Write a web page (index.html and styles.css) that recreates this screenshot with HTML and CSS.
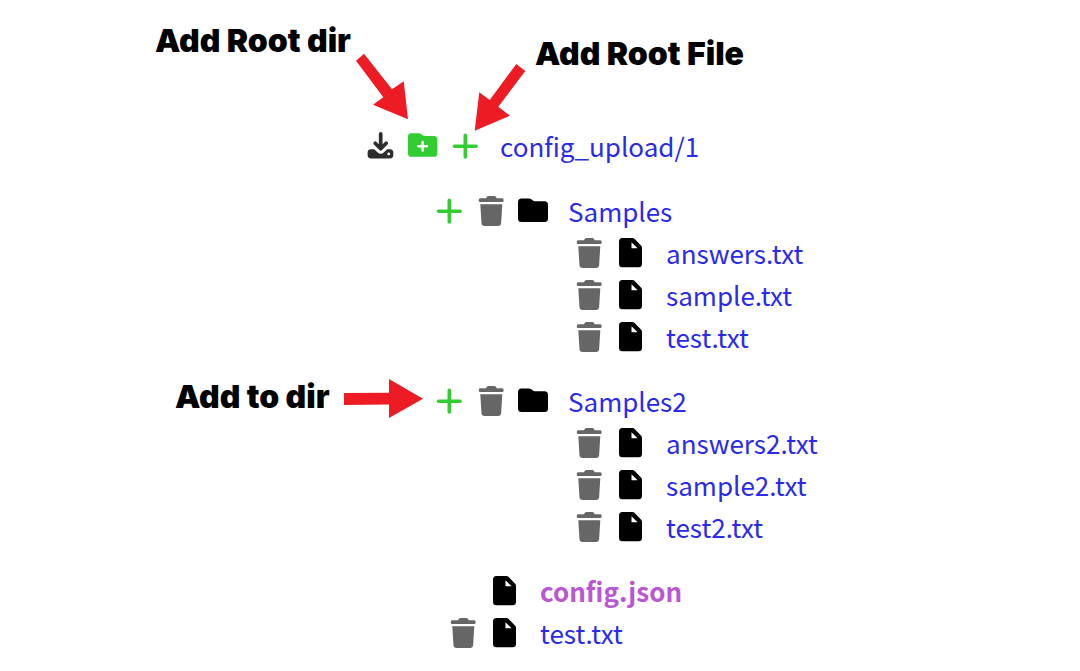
FILE: index.html
```
<!DOCTYPE html>
<html lang="en">
<head>
<meta charset="utf-8">
<title>config_upload</title>
<link rel="stylesheet" href="styles.css">
</head>
<body>
<svg class="sprite" aria-hidden="true">
  <symbol id="plus" viewBox="0 0 30 30"><path d="M15.3 4.4v21.6M4.5 15.2h21.6" fill="none" stroke="currentColor" stroke-width="3.6" stroke-linecap="round"/></symbol>
  <symbol id="trash" viewBox="0 0 30 30"><path d="M4.2 2.3H10l.7-1.2Q11.300 0 12.500 0h5.700q1.200 0 1.800 1.100l.7 1.200h5.500q1.500 0 1.500 1.850T26.200 6H4.200Q2.700 6 2.700 4.150T4.200 2.300zM4.300 8.200h22l-1.200 19.300q-.2 2.400-2.600 2.400H8.100q-2.400 0-2.600-2.400z" fill="currentColor"/></symbol>
  <symbol id="folder" viewBox="0 0 30 30"><path d="M3.500 2.500h7.300q1.400 0 2.500.8l2 1.500q.6.400 1.400.4h9.800Q30 5.200 30 8.700v13.800q0 3.500-3.500 3.500h-23Q0 26 0 22.500V6q0-3.500 3.500-3.500z" fill="currentColor"/></symbol>
  <symbol id="folder-plus" viewBox="0 0 30 30"><path d="M3.300 2.300h7.300q1.400 0 2.500.8l2 1.500q.6.400 1.400.4h9.500q3.300 0 3.300 3.400v14q0 3.400-3.300 3.400H3.300Q0 25.800 0 22.400V5.700q0-3.400 3.300-3.400z" fill="currentColor"/><path d="M14.700 11v8.400M10.500 15.200h8.400" fill="none" stroke="#fff" stroke-width="2.600" stroke-linecap="round"/></symbol>
  <symbol id="file" viewBox="0 0 30 30"><path fill-rule="evenodd" d="M6.400 0h10q1.200 0 2 .8l6.800 6.900q.8.800.8 2v16q0 3.500-3.400 3.500H6.400Q3 29.200 3 25.700V3.500Q3 0 6.400 0zM15.500 4.200v6.100h6.100z" fill="currentColor"/></symbol>
  <symbol id="download" viewBox="0 0 30 30"><path d="M14.700 2.800v14M9.200 12.200l5.500 5.500 5.500-5.500" fill="none" stroke="currentColor" stroke-width="3.700" stroke-linecap="round" stroke-linejoin="round"/><path fill-rule="evenodd" d="M5 18.300h3.200l3.500 3.200q3 2.500 6 0l3.500-3.200h2.700q3.400 0 3.400 3.400v2.400q0 3.400-3.400 3.400H5q-3.400 0-3.400-3.400v-2.400q0-3.400 3.400-3.400zM22.700 21.500a1.400 1.400 0 1 0 0 2.800 1.400 1.400 0 1 0 0-2.800z" fill="currentColor"/></symbol>
</svg>

<main class="board">
  <div class="row">
    <button class="icon dark" aria-label="Download"><svg><use href="#download"/></svg></button>
    <button class="icon green" aria-label="Add directory"><svg><use href="#folder-plus"/></svg></button>
    <button class="icon green" aria-label="Add file"><svg><use href="#plus"/></svg></button>
    <a class="name" href="#">config_upload/1</a>
  </div>

  <section class="group directory">
    <div class="row">
      <button class="icon green" aria-label="Add to Samples"><svg><use href="#plus"/></svg></button>
      <button class="icon grey" aria-label="Delete Samples"><svg><use href="#trash"/></svg></button>
      <span class="icon"><svg><use href="#folder"/></svg></span>
      <a class="name" href="#">Samples</a>
    </div>
    <ul class="files">
      <li class="row"><button class="icon grey" aria-label="Delete answers.txt"><svg><use href="#trash"/></svg></button><span class="icon"><svg><use href="#file"/></svg></span><a class="name" href="#">answers.txt</a></li>
      <li class="row"><button class="icon grey" aria-label="Delete sample.txt"><svg><use href="#trash"/></svg></button><span class="icon"><svg><use href="#file"/></svg></span><a class="name" href="#">sample.txt</a></li>
      <li class="row"><button class="icon grey" aria-label="Delete test.txt"><svg><use href="#trash"/></svg></button><span class="icon"><svg><use href="#file"/></svg></span><a class="name" href="#">test.txt</a></li>
    </ul>
  </section>

  <section class="group directory">
    <div class="row">
      <button class="icon green" aria-label="Add to Samples2"><svg><use href="#plus"/></svg></button>
      <button class="icon grey" aria-label="Delete Samples2"><svg><use href="#trash"/></svg></button>
      <span class="icon"><svg><use href="#folder"/></svg></span>
      <a class="name" href="#">Samples2</a>
    </div>
    <ul class="files">
      <li class="row"><button class="icon grey" aria-label="Delete answers2.txt"><svg><use href="#trash"/></svg></button><span class="icon"><svg><use href="#file"/></svg></span><a class="name" href="#">answers2.txt</a></li>
      <li class="row"><button class="icon grey" aria-label="Delete sample2.txt"><svg><use href="#trash"/></svg></button><span class="icon"><svg><use href="#file"/></svg></span><a class="name" href="#">sample2.txt</a></li>
      <li class="row"><button class="icon grey" aria-label="Delete test2.txt"><svg><use href="#trash"/></svg></button><span class="icon"><svg><use href="#file"/></svg></span><a class="name" href="#">test2.txt</a></li>
    </ul>
  </section>

  <ul class="group root-files">
    <li class="row"><span class="icon"></span><span class="icon"><svg><use href="#file"/></svg></span><a class="name config" href="#">config.json</a></li>
    <li class="row"><button class="icon grey" aria-label="Delete test.txt"><svg><use href="#trash"/></svg></button><span class="icon"><svg><use href="#file"/></svg></span><a class="name" href="#">test.txt</a></li>
  </ul>

  <svg class="arrows" width="560" height="430" viewBox="0 0 560 430" aria-hidden="true">
    <path d="M356 60.700 364 53.700 392 89.300 403.700 81.300 408 119.300 373 104.700 383.300 97.300z"/>
    <path d="M516.300 64 525.300 71 498.300 106.700 510 115.700 474.700 130.700 479.300 92.300 489.700 100z"/>
    <path d="M344 393 389 392.700V379L423 398.700 389 418V404.500L344 405z"/>
  </svg>
  <p class="note note-dir">Add Root dir</p>
  <p class="note note-file">Add Root File</p>
  <p class="note note-add">Add to dir</p>
</main>
</body>
</html>
```
FILE: styles.css
```
* {
  box-sizing: border-box;
}

body {
  margin: 0;
  background: #fff;
  font-family: "Noto Sans CJK JP", "Noto Sans", sans-serif;
}

.sprite {
  position: absolute;
  width: 0;
  height: 0;
}

.board {
  position: relative;
  padding: 125px 0 16px 366px;
}

.row {
  display: flex;
  align-items: center;
  gap: 12px;
  height: 42px;
}

.icon {
  flex: none;
  width: 30px;
  height: 30px;
  padding: 0;
  border: 0;
  background: none;
  color: #000;
}

.icon svg {
  display: block;
  width: 30px;
  height: 30px;
}

.dark {
  color: #2d2d2d;
}

.green {
  color: #32cd32;
}

.grey {
  color: #666;
}

.name {
  margin-left: 8px;
  color: #2a2aee;
  font-size: 26px;
  line-height: 42px;
  text-decoration: none;
  white-space: nowrap;
}

.config {
  color: #ba55d3;
  font-weight: 700;
}

.group {
  margin: 23px 0 0;
  padding: 0;
  list-style: none;
}

.group + .group {
  margin-top: 22px;
}

.directory {
  padding-left: 68px;
}

.files {
  margin: 0;
  padding: 0 0 0 140px;
  list-style: none;
}

.root-files {
  padding-left: 82px;
}

.arrows {
  position: absolute;
  top: 0;
  left: 0;
  fill: #ed1c24;
  pointer-events: none;
}

.note {
  position: absolute;
  margin: 0;
  color: #000;
  font: 900 32px/40px Inter, sans-serif;
  white-space: nowrap;
}

.note-dir {
  top: 21px;
  left: 155px;
}

.note-file {
  top: 34px;
  left: 535px;
}

.note-add {
  top: 377px;
  left: 175px;
}
```
